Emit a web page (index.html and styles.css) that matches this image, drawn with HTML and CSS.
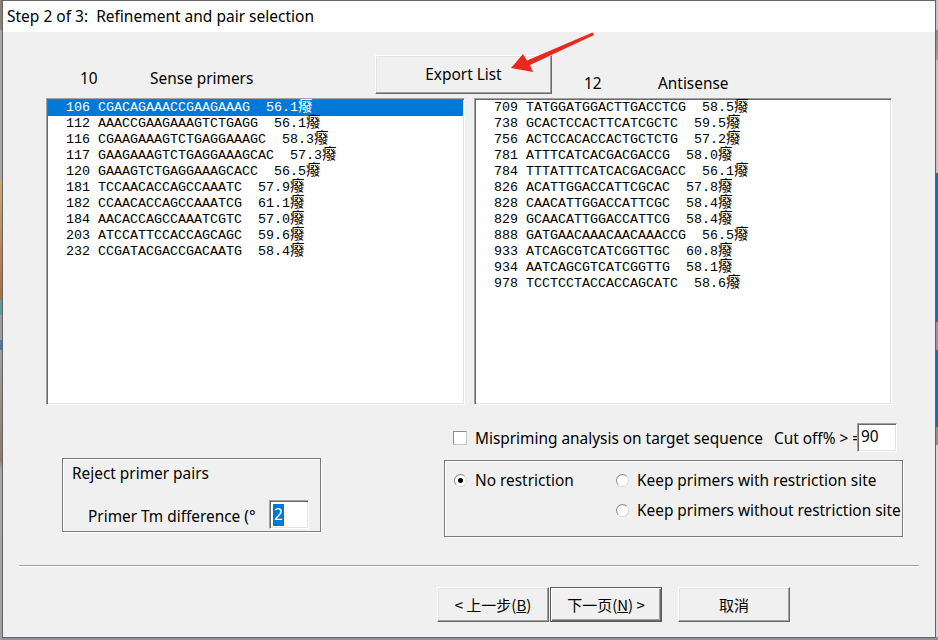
FILE: index.html
```html
<!DOCTYPE html>
<html>
<head>
<meta charset="utf-8">
<title>Step 2 of 3</title>
<link rel="stylesheet" href="styles.css">
</head>
<body>
<div class="screen">
  <div class="desk desk-left"></div>
  <div class="window">
    <div class="titlebar">Step 2 of 3:  Refinement and pair selection</div>
    <div class="dialog">
      <div class="header">
        <span class="hlabel count-sense">10</span>
        <span class="hlabel label-sense">Sense primers</span>
        <button class="btn btn-export">Export List</button>
        <span class="hlabel count-anti">12</span>
        <span class="hlabel label-anti">Antisense</span>
      </div>
      <div class="lists">
        <div class="listbox listbox-sense">
          <div class="row selected">106 CGACAGAAACCGAAGAAAG  56.1<span class="deg">癈</span></div>
          <div class="row">112 AAACCGAAGAAAGTCTGAGG  56.1<span class="deg">癈</span></div>
          <div class="row">116 CGAAGAAAGTCTGAGGAAAGC  58.3<span class="deg">癈</span></div>
          <div class="row">117 GAAGAAAGTCTGAGGAAAGCAC  57.3<span class="deg">癈</span></div>
          <div class="row">120 GAAAGTCTGAGGAAAGCACC  56.5<span class="deg">癈</span></div>
          <div class="row">181 TCCAACACCAGCCAAATC  57.9<span class="deg">癈</span></div>
          <div class="row">182 CCAACACCAGCCAAATCG  61.1<span class="deg">癈</span></div>
          <div class="row">184 AACACCAGCCAAATCGTC  57.0<span class="deg">癈</span></div>
          <div class="row">203 ATCCATTCCACCAGCAGC  59.6<span class="deg">癈</span></div>
          <div class="row">232 CCGATACGACCGACAATG  58.4<span class="deg">癈</span></div>
        </div>
        <div class="listbox listbox-anti">
          <div class="row">709 TATGGATGGACTTGACCTCG  58.5<span class="deg">癈</span></div>
          <div class="row">738 GCACTCCACTTCATCGCTC  59.5<span class="deg">癈</span></div>
          <div class="row">756 ACTCCACACCACTGCTCTG  57.2<span class="deg">癈</span></div>
          <div class="row">781 ATTTCATCACGACGACCG  58.0<span class="deg">癈</span></div>
          <div class="row">784 TTTATTTCATCACGACGACC  56.1<span class="deg">癈</span></div>
          <div class="row">826 ACATTGGACCATTCGCAC  57.8<span class="deg">癈</span></div>
          <div class="row">828 CAACATTGGACCATTCGC  58.4<span class="deg">癈</span></div>
          <div class="row">829 GCAACATTGGACCATTCG  58.4<span class="deg">癈</span></div>
          <div class="row">888 GATGAACAAACAACAAACCG  56.5<span class="deg">癈</span></div>
          <div class="row">933 ATCAGCGTCATCGGTTGC  60.8<span class="deg">癈</span></div>
          <div class="row">934 AATCAGCGTCATCGGTTG  58.1<span class="deg">癈</span></div>
          <div class="row">978 TCCTCCTACCACCAGCATC  58.6<span class="deg">癈</span></div>
        </div>
      </div>
      <div class="mispriming">
        <span class="checkbox"></span>
        <span class="mis-label">Mispriming analysis on target sequence</span>
        <span class="cut-label">Cut off% &gt; =</span>
        <span class="field field-cut">90</span>
      </div>
      <div class="groups">
        <div class="group group-reject">
          <div class="group-title">Reject primer pairs</div>
          <div class="tm-row">
            <span class="tm-label">Primer Tm difference (°</span>
            <span class="field field-tm"><span class="sel">2</span></span>
          </div>
        </div>
        <div class="group group-radio">
          <span class="radio-item"><span class="radio checked"></span>No restriction</span>
          <span class="radio-item"><span class="radio"></span>Keep primers with restriction site</span>
          <span class="radio-item"></span>
          <span class="radio-item"><span class="radio"></span>Keep primers without restriction site</span>
        </div>
      </div>
      <div class="separator"></div>
      <div class="buttons">
        <button class="btn btn-nav">&lt; 上一步(<u>B</u>)</button>
        <button class="btn btn-nav btn-default">下一页(<u>N</u>) &gt;</button>
        <button class="btn btn-nav btn-cancel">取消</button>
      </div>
    </div>
  </div>
  <div class="desk desk-right"></div>
  <svg class="arrow" width="100" height="50" viewBox="505 28 100 50">
    <polygon points="511,68 523,54 527,60.5 592.5,32.5 594,35 530,65 533,72" fill="#e8291f"/>
  </svg>
</div>
</body>
</html>
```

FILE: styles.css
```css
* { box-sizing: border-box; }
html, body { margin: 0; padding: 0; }
body {
  width: 938px;
  height: 640px;
  overflow: hidden;
  font-family: "Noto Sans", "Noto Sans CJK SC", sans-serif;
  font-size: 15.4px;
  color: #000;
}
.screen {
  position: relative;
  display: flex;
  width: 938px;
  height: 640px;
  background: #8a929c;
}
.desk { width: 2px; height: 640px; }
.desk-left {
  background: linear-gradient(to bottom, #8a8278 0, #8a8278 30px, #a7a7a7 30px, #a7a7a7 180px, #c9a77a 180px, #b7875a 245px, #a2704c 300px, #5e9a9a 300px, #5e9a9a 315px, #9a9a9a 315px, #9aa0a8 340px, #4a78a8 340px, #4a78a8 350px, #a0a0a0 350px, #8f7a6a 460px, #a8a8a8 470px, #a0a0a0 640px);
}
.desk-right {
  background: linear-gradient(to bottom, #b7c6da 0, #b7c6da 30px, #8a8a8a 30px, #9aa0a8 60px, #c0c4c8 60px, #c0c4c8 173px, #1d68b4 173px, #1d68b4 322px, #8e98a4 322px, #8e98a4 350px, #1d68b4 350px, #1d68b4 427px, #8a8f96 427px, #8a8f96 445px, #d6dade 445px, #d6dade 637px, #7a8ea8 637px);
}
.window {
  width: 934px;
  height: 638px;
  border: 1px solid #646464;
  background: #f0f0f0;
  display: flex;
  flex-direction: column;
}
.titlebar {
  height: 31px;
  flex: none;
  background: #fff;
  padding-left: 4px;
  line-height: 31px;
  font-size: 15.5px;
  white-space: pre;
}
.dialog { flex: 1; }

/* header */
.header {
  display: flex;
  align-items: flex-start;
  margin-top: 23px;
  height: 39px;
}
.hlabel { line-height: 20px; white-space: nowrap; }
.count-sense { margin-left: 77px; width: 70px; margin-top: 14px; }
.label-sense { width: 225px; margin-top: 14px; }
.count-anti { margin-left: 32px; width: 74px; margin-top: 19px; }
.label-anti { margin-top: 19px; }

.btn {
  font-family: "Noto Sans", "Noto Sans CJK SC", sans-serif;
  font-size: 15.4px;
  color: #000;
  background: #f0f0f0;
  border: 1px solid;
  border-color: #ffffff #696969 #696969 #ffffff;
  box-shadow: inset -1px -1px 0 #a0a0a0, inset 1px 1px 0 #e3e3e3;
  padding: 0;
  margin: 0;
}
.btn-export { width: 177px; height: 39px; }

/* list boxes */
.lists {
  display: flex;
  gap: 9px;
  margin-top: 4px;
  margin-left: 43px;
  height: 307px;
}
.listbox {
  height: 307px;
  background: #fff;
  border: 1px solid;
  border-color: #a0a0a0 #ffffff #ffffff #a0a0a0;
  box-shadow: inset 1px 1px 0 #696969, inset -1px -1px 0 #e3e3e3;
  padding: 1px;
  font-family: "Liberation Mono", "Noto Sans CJK SC", monospace;
  font-size: 13.33px;
  overflow: hidden;
}
.listbox-sense { width: 419px; }
.listbox-anti { width: 418px; }
.row {
  height: 16px;
  line-height: 16px;
  padding-left: 18px;
  white-space: pre;
  color: #000;
}
.row.selected { background: #0078d7; color: #fff; }
.deg {
  font-family: "Noto Sans CJK SC", sans-serif;
  font-size: 14.5px;
  line-height: 10px;
}

/* mispriming */
.mispriming {
  display: flex;
  align-items: center;
  margin-top: 18px;
  height: 29px;
  padding-left: 450px;
}
.checkbox {
  width: 14px;
  height: 14px;
  background: #fff;
  border: 1px solid;
  border-color: #8c8c8c #c8c8c8 #c8c8c8 #8c8c8c;
  margin-right: 8px;
  margin-top: 1px;
}
.mis-label { width: 299px; white-space: nowrap; padding-top: 1px; }
.cut-label { width: 83px; white-space: nowrap; padding-top: 1px; }
.field {
  display: block;
  background: #fff;
  border: 1px solid;
  border-color: #a0a0a0 #ffffff #ffffff #a0a0a0;
  box-shadow: inset 1px 1px 0 #696969, inset -1px -1px 0 #e3e3e3;
}
.field-cut {
  width: 40px;
  height: 29px;
  padding-left: 3px;
  line-height: 25px;
}

/* groups */
.groups {
  display: flex;
  align-items: flex-start;
  margin-top: 6px;
}
.group {
  border: 1px solid #7a7a7a;
  box-shadow: 1px 1px 0 #ffffff, inset 1px 1px 0 #ffffff;
}
.group-reject {
  margin-left: 59px;
  width: 259px;
  height: 74px;
  padding: 5px 0 0 9px;
}
.group-title { line-height: 20px; }
.tm-row {
  display: flex;
  align-items: center;
  margin-top: 16px;
  height: 29px;
}
.tm-label { margin-left: 16px; width: 181px; white-space: nowrap; padding-top: 3px; }
.field-tm {
  width: 40px;
  height: 29px;
  padding: 3px 0 0 3px;
}
.sel {
  display: inline-block;
  background: #0078d7;
  color: #fff;
  line-height: 22px;
  height: 22px;
  padding: 0 1px;
}
.group-radio {
  margin-left: 123px;
  margin-top: 2px;
  width: 459px;
  height: 77px;
  padding: 4px 0 0 9px;
  display: grid;
  grid-template-columns: 162px auto;
  grid-auto-rows: 30px;
  overflow: hidden;
}
.radio-item {
  display: flex;
  align-items: center;
  white-space: nowrap;
}
.radio {
  width: 13px;
  height: 13px;
  border-radius: 50%;
  background: #fff;
  border: 1px solid;
  border-color: #8c8c8c #d8d8d8 #d8d8d8 #8c8c8c;
  margin-right: 8px;
  flex: none;
  display: flex;
  align-items: center;
  justify-content: center;
}
.radio.checked::after {
  content: "";
  width: 5px;
  height: 5px;
  border-radius: 50%;
  background: #000;
}

/* separator */
.separator {
  margin-top: 28px;
  margin-left: 16px;
  width: 900px;
  height: 2px;
  border-top: 1px solid #a0a0a0;
  border-bottom: 1px solid #ffffff;
}

/* bottom buttons */
.buttons {
  display: flex;
  margin-top: 20px;
  margin-left: 434px;
}
.btn-nav {
  width: 112px;
  height: 35px;
  font-family: "Noto Sans CJK SC", sans-serif;
  font-size: 15px;
}
.btn-default {
  margin-left: 1px;
  border: 1px solid #5a5a5a;
  box-shadow: inset 1px 1px 0 #ffffff, inset -1px -1px 0 #696969, inset -2px -2px 0 #a0a0a0;
}
.btn-cancel { margin-left: 16px; }

.arrow {
  position: absolute;
  left: 505px;
  top: 28px;
  pointer-events: none;
}
```
